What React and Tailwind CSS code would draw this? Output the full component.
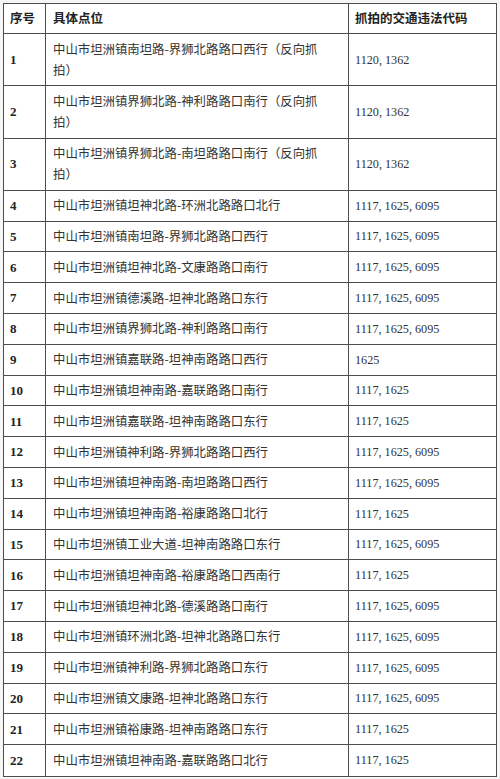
import React from 'react';

const rows = [
  { no: 1, place: ['中山市坦洲镇南坦路-界狮北路路口西行（反向抓', '拍）'], code: '1120,1362' },
  { no: 2, place: ['中山市坦洲镇界狮北路-神利路路口南行（反向抓', '拍）'], code: '1120,1362' },
  { no: 3, place: ['中山市坦洲镇界狮北路-南坦路路口南行（反向抓', '拍）'], code: '1120,1362' },
  { no: 4, place: ['中山市坦洲镇坦神北路-环洲北路路口北行'], code: '1117,1625,6095' },
  { no: 5, place: ['中山市坦洲镇南坦路-界狮北路路口西行'], code: '1117,1625,6095' },
  { no: 6, place: ['中山市坦洲镇坦神北路-文康路路口南行'], code: '1117,1625,6095' },
  { no: 7, place: ['中山市坦洲镇德溪路-坦神北路路口东行'], code: '1117,1625,6095' },
  { no: 8, place: ['中山市坦洲镇界狮北路-神利路路口南行'], code: '1117,1625,6095' },
  { no: 9, place: ['中山市坦洲镇嘉联路-坦神南路路口西行'], code: '1625' },
  { no: 10, place: ['中山市坦洲镇坦神南路-嘉联路路口南行'], code: '1117,1625' },
  { no: 11, place: ['中山市坦洲镇嘉联路-坦神南路路口东行'], code: '1117,1625' },
  { no: 12, place: ['中山市坦洲镇神利路-界狮北路路口西行'], code: '1117,1625,6095' },
  { no: 13, place: ['中山市坦洲镇坦神南路-南坦路路口西行'], code: '1117,1625,6095' },
  { no: 14, place: ['中山市坦洲镇坦神南路-裕康路路口北行'], code: '1117,1625' },
  { no: 15, place: ['中山市坦洲镇工业大道-坦神南路路口东行'], code: '1117,1625,6095' },
  { no: 16, place: ['中山市坦洲镇坦神南路-裕康路路口西南行'], code: '1117,1625' },
  { no: 17, place: ['中山市坦洲镇坦神北路-德溪路路口南行'], code: '1117,1625,6095' },
  { no: 18, place: ['中山市坦洲镇环洲北路-坦神北路路口东行'], code: '1117,1625,6095' },
  { no: 19, place: ['中山市坦洲镇神利路-界狮北路路口东行'], code: '1117,1625,6095' },
  { no: 20, place: ['中山市坦洲镇文康路-坦神北路路口东行'], code: '1117,1625,6095' },
  { no: 21, place: ['中山市坦洲镇裕康路-坦神南路路口东行'], code: '1117,1625' },
  { no: 22, place: ['中山市坦洲镇坦神南路-嘉联路路口北行'], code: '1117,1625' },
];

const cjk = "font-['Noto_Sans_CJK_SC',sans-serif]";
const num = "font-['Liberation_Serif',serif]";

// commas in the source are half-width SimSun glyphs, wider than a Latin comma
const Code = ({ value }) => {
  const parts = value.split(',');
  return (
    <span>
      {parts.map((p, i) => (
        <React.Fragment key={i}>
          {p}
          {i < parts.length - 1 && <span className="mr-[3px]">,</span>}
        </React.Fragment>
      ))}
    </span>
  );
};

export default function App() {
  return (
    <div className="w-[500px] h-[779px] bg-[#f6f6f6] pt-[3px] pl-[3px] overflow-hidden">
      <div className="w-[494px] bg-white border border-[#4d4d4d] text-[#333]">
        {/* Header */}
        <div className="flex h-[30px] border-b border-[#4d4d4d]">
          <div className={`w-[42px] shrink-0 border-r border-[#4d4d4d] pl-[6px] flex items-center text-[12.5px] font-bold text-[#222] ${cjk}`}>
            序号
          </div>
          <div className={`w-[303px] shrink-0 border-r border-[#4d4d4d] pl-[7px] flex items-center text-[12.5px] font-bold text-[#222] ${cjk}`}>
            具体点位
          </div>
          <div className={`flex-1 pl-[6px] flex items-center text-[12.5px] font-bold text-[#222] ${cjk}`}>
            抓拍的交通违法代码
          </div>
        </div>

        {rows.map((r, i) => {
          const tall = r.place.length > 1;
          const last = i === rows.length - 1;
          return (
            <div
              key={r.no}
              className={`flex ${tall ? 'h-[52.3px]' : 'h-[30.8px]'} ${last ? '' : 'border-b border-[#4d4d4d]'}`}
            >
              <div className={`w-[42px] shrink-0 border-r border-[#4d4d4d] pl-[6px] flex items-center text-[13px] font-bold text-[#222] ${num}`}>
                {r.no}
              </div>
              <div className={`w-[303px] shrink-0 border-r border-[#4d4d4d] pl-[7px] flex flex-col justify-center text-[12.4px] leading-[21px] ${cjk}`}>
                {r.place.map((line) => (
                  <span key={line} className="whitespace-nowrap">{line}</span>
                ))}
              </div>
              <div className={`flex-1 pl-[6px] flex items-center text-[12.2px] ${num}`}>
                <Code value={r.code} />
              </div>
            </div>
          );
        })}
      </div>
    </div>
  );
}
